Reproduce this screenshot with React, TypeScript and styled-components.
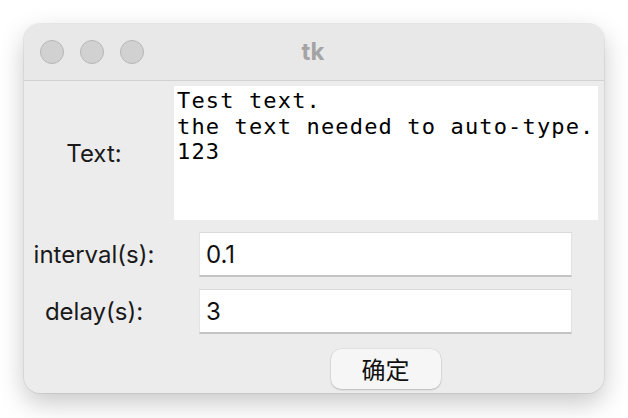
import React from 'react';
import styled, { createGlobalStyle } from 'styled-components';

const GlobalStyle = createGlobalStyle`
  html, body {
    margin: 0;
    padding: 0;
    background: #ffffff;
  }
`;

const Page = styled.div`
  width: 628px;
  height: 418px;
  padding: 24px;
  box-sizing: border-box;
`;

const Window = styled.div`
  width: 580px;
  height: 369px;
  background: #ececec;
  border-radius: 16px;
  overflow: hidden;
  box-shadow: 0 10px 26px rgba(0, 0, 0, 0.22), 0 0 0 1px rgba(0, 0, 0, 0.06);
  display: flex;
  flex-direction: column;
`;

const TitleBar = styled.div`
  position: relative;
  height: 56px;
  flex-shrink: 0;
  background: #e8e8e8;
  border-bottom: 1px solid #d2d2d2;
  display: flex;
  align-items: center;
  justify-content: center;
`;

const Lights = styled.div`
  position: absolute;
  left: 16px;
  top: 16px;
  display: flex;
  gap: 16px;
`;

const Light = styled.span`
  width: 22px;
  height: 22px;
  border-radius: 50%;
  background: #d1d1d1;
  border: 1px solid #b6b6b6;
`;

const Title = styled.span`
  font-family: Inter, 'Liberation Sans', sans-serif;
  font-weight: 700;
  font-size: 24px;
  color: #a4a4a4;
  margin-left: -2px;
  margin-top: -2px;
`;

const Body = styled.div`
  flex: 1;
  display: grid;
  grid-template-columns: 140px minmax(0, 1fr);
  grid-template-rows: 134px 45px 45px 40px;
  row-gap: 12px;
  padding-top: 5px;
  align-items: center;
  font-family: Inter, 'Liberation Sans', sans-serif;
`;

const Label = styled.div`
  font-size: 24px;
  color: #1a1a1a;
  text-align: center;
`;

const TextArea = styled.div`
  width: 424px;
  height: 134px;
  margin-left: 10px;
  background: #ffffff;
  padding: 2px 3px;
  box-sizing: border-box;
  overflow: hidden;
  font-family: 'DejaVu Sans Mono', 'Liberation Mono', monospace;
  font-size: 22px;
  letter-spacing: 1.15px;
  line-height: 25.7px;
  color: #000000;
  white-space: pre;
`;

const Entry = styled.div`
  height: 45px;
  width: 373px;
  margin-left: 35px;
  box-sizing: border-box;
  background: #ffffff;
  border-top: 1px solid #dadada;
  border-left: 1px solid #e2e2e2;
  border-right: 1px solid #e2e2e2;
  border-bottom: 2px solid #c4c4c4;
  padding: 0 6px;
  display: flex;
  align-items: center;
  font-size: 24px;
  color: #111111;
`;

const ButtonCell = styled.div`
  grid-column: 2;
  width: 373px;
  margin-left: 35px;
  display: flex;
  justify-content: center;
  margin-top: 5px;
`;

const Button = styled.button`
  width: 110px;
  height: 40px;
  border: none;
  border-radius: 10px;
  background: #f6f6f6;
  box-shadow: 0 1px 2px rgba(0, 0, 0, 0.18), 0 0 0 0.5px rgba(0, 0, 0, 0.08);
  font-family: 'Noto Sans CJK SC', sans-serif;
  font-size: 24px;
  color: #111111;
  padding: 0;
`;

export default function App() {
  return (
    <>
      <GlobalStyle />
      <Page>
        <Window>
          <TitleBar>
            <Lights>
              <Light />
              <Light />
              <Light />
            </Lights>
            <Title>tk</Title>
          </TitleBar>
          <Body>
            <Label>Text:</Label>
            <TextArea>{'Test text.\nthe text needed to auto-type.\n123'}</TextArea>
            <Label>interval(s):</Label>
            <Entry>0.1</Entry>
            <Label>delay(s):</Label>
            <Entry>3</Entry>
            <ButtonCell>
              <Button>确定</Button>
            </ButtonCell>
          </Body>
        </Window>
      </Page>
    </>
  );
}
